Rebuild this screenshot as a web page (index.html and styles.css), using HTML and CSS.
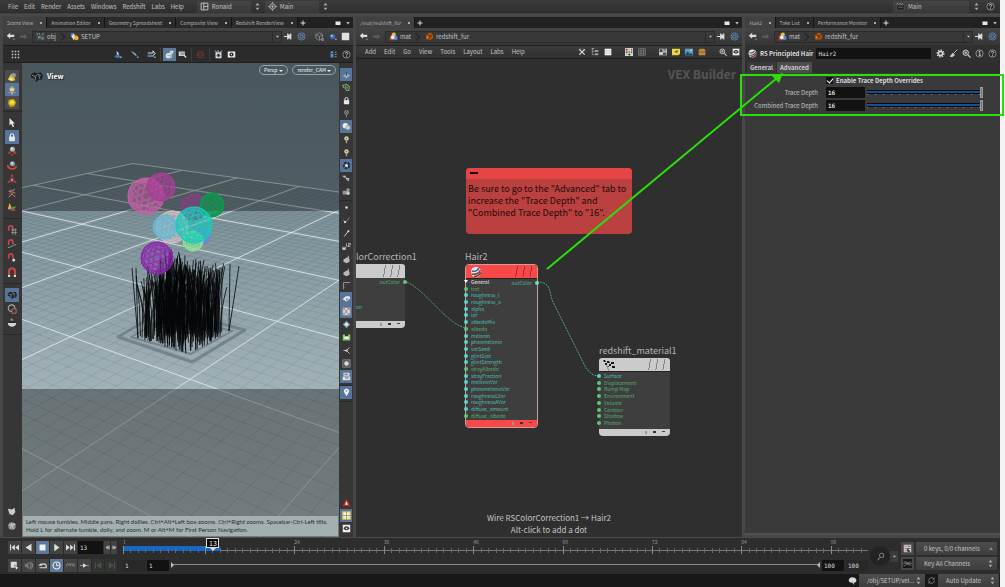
FILE: index.html
```
<!DOCTYPE html>
<html lang="en">

<head>
    <meta charset="UTF-8">
    <meta name="viewport" content="width=device-width, initial-scale=1.0">
    <title>redshift_fur</title>
    <link rel="stylesheet" href="styles.css">
</head>

<body>

    <!-- icon set -->
    <svg class="sprite" aria-hidden="true">
        <symbol id="layout" viewBox="0 0 12 12"><path d="M1.500 1.500h9v9h-9zM5 1.500v9M5 6h5.500" fill="none" stroke="#c8c8c8" stroke-width="1.200"/></symbol>
        <symbol id="target" viewBox="0 0 12 12"><circle cx="6" cy="6" r="3.500" fill="none" stroke="#c8c8c8"/><circle cx="6" cy="6" r="1.500" fill="#c8c8c8"/><path d="M6 0l1.500 2h-3zM6 12l1.500-2h-3zM0 6l2-1.500v3zM12 6l-2-1.500v3z" fill="#c8c8c8"/></symbol>
        <symbol id="updown" viewBox="0 0 12 12"><path d="M6 1l2.500 3.500h-5zM6 11l2.500-3.500h-5z" fill="#a8a8a8"/></symbol>
        <symbol id="clap" viewBox="0 0 12 12"><path d="M1 4h10v7H1z" fill="#252525" stroke="#666" stroke-width=".6"/><path d="M1 3l2-2M4 3.500l2-2M7 4l2-2" stroke="#bbb"/><path d="M3 7h6" stroke="#777"/></symbol>
        <symbol id="help" viewBox="0 0 12 12"><circle cx="6" cy="6" r="4.800" fill="#222" stroke="#aaa"/><path d="M4.300 4.800C4.300 2.500 8 2.700 7.600 5 7.400 6 6 6 6 7.300" fill="none" stroke="#ddd" stroke-width="1.300"/><circle cx="6" cy="9" r=".8" fill="#ddd"/></symbol>
        <symbol id="info" viewBox="0 0 12 12"><circle cx="6" cy="6" r="4.800" fill="none" stroke="#aaa"/><path d="M5 5h1.500v3.500M5 8.500h3" fill="none" stroke="#ddd"/><circle cx="6" cy="3.200" r=".9" fill="#ddd"/></symbol>
        <symbol id="back" viewBox="0 0 12 12"><path d="M1 5l4.500-4v2.500H11v3H5.500V9z" fill="#dcdcdc"/><path d="M9 9h3l-1.500 2z" fill="#999"/></symbol>
        <symbol id="forward" viewBox="0 0 12 12"><path d="M11 6L7 2.500v2H1.500v3H7v2z" fill="#5c5c5c"/></symbol>
        <symbol id="obj" viewBox="0 0 12 12"><path d="M1 4h10v7H1z" fill="#3d5054"/><path d="M1 1l1.500 3M4 1l1.500 3M8 3l3-1" stroke="#aaa"/><path d="M3 6h3v2H3z" fill="#87a5a5"/><path d="M7 7h4v3H7z" fill="#777"/></symbol>
        <symbol id="geo" viewBox="0 0 12 12"><path d="M1 2l4-1v5L1 7z" fill="#4c82c8"/><path d="M2 6l3-4 3 4-3 5z" fill="#e4e4e4"/><path d="M6 2l4 3-3 3z" fill="#cf3728"/><circle cx="8.500" cy="8" r="3" fill="#e8b229"/></symbol>
        <symbol id="mat" viewBox="0 0 12 12"><path d="M1 6l3-4 3 3v6H1z" fill="#c93c2e"/><circle cx="6.500" cy="3.500" r="2.700" fill="#e0c14a"/><circle cx="8.500" cy="8" r="3" fill="#4a8bd0"/><circle cx="5" cy="7" r="2.500" fill="#eee"/></symbol>
        <symbol id="box" viewBox="0 0 12 12"><path d="M2 3l5-2 4 2-1 6-5 2-4-2z" fill="#b65a12"/><path d="M2 3l4 2 5-2M6 5L5 11" stroke="#542605" fill="none"/><circle cx="3.500" cy="7" r="1" fill="#f09835"/><circle cx="8" cy="6.500" r="1" fill="#542605"/></symbol>
        <symbol id="pin" viewBox="0 0 12 12"><path d="M0 6h5M5 2v8M5 4h4v4H5M9 2v8" fill="none" stroke="#ddd" stroke-width="1.600"/><path d="M5 4h4v4H5z" fill="#ddd"/></symbol>
        <symbol id="link" viewBox="0 0 12 12"><circle cx="6" cy="6" r="4.800" fill="#33495f" stroke="#637f9d" stroke-width="1.300"/><circle cx="6" cy="6" r="2.300" fill="none" stroke="#7e9dbf"/></symbol>
        <symbol id="cube" viewBox="0 0 12 12"><path d="M1 3.500L6 1l4 2.500v5L5.500 11 1 8zM1 3.500L6 6l4-2.500M6 6v5" fill="none" stroke="#8b9a9a"/><path d="M8 8h4v4H8z" fill="#777"/></symbol>
        <symbol id="bluedot" viewBox="0 0 12 12"><circle cx="6" cy="6" r="3.400" fill="#3972bb"/><circle cx="5" cy="5" r="1.300" fill="#a9cdf4"/><path d="M9 9h3l-1.500 2z" fill="#ccc"/></symbol>
        <symbol id="white" viewBox="0 0 12 12"><path d="M1 1h10v10H1z" fill="#e2e2e2"/></symbol>
        <symbol id="maxi" viewBox="0 0 12 12"><path d="M1 3h10v7H1z" fill="#e8e8e8"/></symbol>
        <symbol id="down" viewBox="0 0 12 12"><path d="M2.500 4h7L6 9z" fill="#bbb"/></symbol>
        <symbol id="plus" viewBox="0 0 12 12"><path d="M6 1v10M1 6h10" stroke="#ddd" stroke-width="2"/></symbol>
        <symbol id="dots" viewBox="0 0 12 12"><path d="M1 2h10M1 6h10M1 10h10" stroke="#ccc" stroke-width="2" stroke-dasharray="2"/></symbol>
        <symbol id="handle" viewBox="0 0 12 12"><path d="M1 8l4-1 2-5 1 5 3 2-5 2z" fill="#4178b4"/><path d="M5 1l3 5H5z" fill="#ddd"/><path d="M9 9h3l-1.500 2z" fill="#ccc"/></symbol>
        <symbol id="handle2" viewBox="0 0 12 12"><path d="M1 2l6 2 3 5-4-2z" fill="#4178b4"/><path d="M3 2l5 5" stroke="#ddd"/><path d="M9 9h3l-1.500 2z" fill="#ccc"/></symbol>
        <symbol id="handle3" viewBox="0 0 12 12"><path d="M1 4h7V1l3 4-3 2M1 8h8" stroke="#ddd" fill="none" stroke-width="1.300"/><path d="M1 6h6v3H1z" fill="#4178b4"/><path d="M9 9h3l-1.500 2z" fill="#ccc"/></symbol>
        <symbol id="cubes" viewBox="0 0 12 12"><path d="M1 6l2-2h3l1-3h4v3L9 6v4L7 11H3l-2-1z" fill="#dfe5ea"/><path d="M3 7h4v4M7 3l3 1M7 7l3-2" stroke="#71889e" fill="none" stroke-width=".8"/></symbol>
        <symbol id="select" viewBox="0 0 12 12"><path d="M1 2h8v6H1z" fill="#d3d9df"/><path d="M3 3h5v4H3z" fill="#8ca5be"/><path d="M8 7l3 3" stroke="#eee" stroke-width="1.500"/></symbol>
        <symbol id="stopred" viewBox="0 0 12 12"><circle cx="6" cy="6" r="4.600" fill="none" stroke="#6e3030" stroke-width="1.200"/><path d="M3.500 4h5v4h-5z" fill="none" stroke="#783838"/></symbol>
        <symbol id="film" viewBox="0 0 12 12"><path d="M2 3h8v8H2z" fill="#ddd"/><circle cx="6" cy="7" r="2.500" fill="#46718f"/><path d="M1 1l3 2M5 0l1 3M11 1L8 3" stroke="#ddd"/><circle cx="6" cy="7" r="1" fill="#111"/></symbol>
        <symbol id="cam" viewBox="0 0 12 12"><path d="M1 2h10v8H1z" fill="#eee"/><circle cx="6" cy="6" r="2.800" fill="#222"/><circle cx="6" cy="6" r="1" fill="#eee"/></symbol>
        <symbol id="people" viewBox="0 0 12 12"><circle cx="4" cy="3" r="1.700" fill="#4f8fcf"/><path d="M2 5h4v5H2z" fill="#4f8fcf"/><path d="M8 3h2M8 6h2M8 9h2" stroke="#8aa8c8" stroke-width="1.500"/></symbol>
        <symbol id="shader" viewBox="0 0 12 12"><path d="M1 9l4-7 3 2 2 6-5 1z" fill="#e0c33d"/><circle cx="8" cy="4" r="2.700" fill="#999"/><path d="M2 9l3-2 2 3z" fill="#fff3ab"/></symbol>
        <symbol id="lamp" viewBox="0 0 12 12"><path d="M6 1l4 4-4 3-4-3z" fill="#b5a677"/><circle cx="6" cy="6" r="2.500" fill="#edd27c"/><path d="M5 8h2v3H5zM1 9h3M8 9h3" stroke="#999" fill="#ccc"/></symbol>
        <symbol id="sphere-y" viewBox="0 0 12 12"><path d="M2 2l6-1 3 4-2 5-5 1-3-4z" fill="#b99b16"/><circle cx="6" cy="5.500" r="3" fill="#f2d838"/></symbol>
        <symbol id="cursor" viewBox="0 0 12 12"><path d="M3 0v9l2-2 2 4 1.500-.7L7 6.500h2.500z" fill="#e8e8e8"/></symbol>
        <symbol id="lock" viewBox="0 0 12 12"><path d="M2.500 5.500h7V11h-7z" fill="#e8e8e8"/><path d="M4 6V4a2 2 0 0 1 4 0v2" fill="none" stroke="#e8e8e8" stroke-width="1.300"/></symbol>
        <symbol id="move" viewBox="0 0 12 12"><path d="M0 10l3-4 2 2zM12 10L9 5 7 9zM4 10l2 2 2-2z" fill="#c23b2e"/><circle cx="6.500" cy="4" r="3" fill="#a9b6c1"/><circle cx="6" cy="3" r="1.200" fill="#e5e9ed"/></symbol>
        <symbol id="rotate" viewBox="0 0 12 12"><path d="M1 6c0 6 10 6 10 1" fill="none" stroke="#d04a26" stroke-width="2.200"/><circle cx="6.500" cy="4.500" r="3" fill="#8ba3bd"/><circle cx="6" cy="4" r="1.200" fill="#dce5ee"/></symbol>
        <symbol id="scale" viewBox="0 0 12 12"><path d="M6 0l2 3H4zM0 11l3-4 1 3zM12 11L9 7 8 10z" fill="#d03d35"/><path d="M4 4h4v6H4z" fill="#923b3b"/><circle cx="6" cy="7" r="1.400" fill="#8da4bf"/></symbol>
        <symbol id="pose" viewBox="0 0 12 12"><path d="M6 2v5l-4 4M6 7l4 4M2 4l8 2M3 2l3 3 3-4" stroke="#b9a3a3" fill="none"/><circle cx="6" cy="5" r="1.500" fill="#c23b35"/><circle cx="3" cy="7" r="1" fill="#c23b35"/></symbol>
        <symbol id="axes" viewBox="0 0 12 12"><path d="M3 1l3 7-5 1z" fill="#e0b52f"/><path d="M1 9h8l2 2-8-1z" fill="#cb3c2c"/><path d="M5 6l6-1-3 5z" fill="#4b9951"/><path d="M4 7l3 1-2 2z" fill="#4e83cf"/></symbol>
        <symbol id="magnet" viewBox="0 0 12 12"><path d="M2.500 11V5a3.500 3.500 0 0 1 7 0v6" fill="none" stroke="#c8454a" stroke-width="2.600"/><path d="M1.200 9.500h2.600V12H1.200zM8.200 9.500h2.600V12H8.200z" fill="#ddd"/></symbol>
        <symbol id="magnet-grid" viewBox="0 0 12 12"><path d="M2 7V3.500a2.500 2.500 0 0 1 5 0V7" fill="none" stroke="#c8454a" stroke-width="2"/><path d="M5 6h7M5 9h7M7 4v8M10 4v8" stroke="#aaa" stroke-width=".8"/></symbol>
        <symbol id="magnet-curve" viewBox="0 0 12 12"><path d="M2 7V3.500a2.500 2.500 0 0 1 5 0V6" fill="none" stroke="#c8454a" stroke-width="2"/><path d="M1 10c5 1 5-4 10-3" fill="none" stroke="#aaa"/></symbol>
        <symbol id="magnet-point" viewBox="0 0 12 12"><path d="M2 7V3.500a2.500 2.500 0 0 1 5 0V6" fill="none" stroke="#c8454a" stroke-width="2"/><circle cx="8" cy="8.500" r="1.800" fill="#ddd"/></symbol>
        <symbol id="viewtool" viewBox="0 0 12 12"><path d="M1 4l3-2 3 1 3-1 2 3-1 4-3 0-2 2-2-3-3-1z" fill="#1d2225"/><path d="M2 5l3 1 2-2 3 1M5 6v3M8 5l1 3" stroke="#87949c" fill="none" stroke-width=".8"/></symbol>
        <symbol id="region" viewBox="0 0 12 12"><circle cx="5.500" cy="5" r="4" fill="none" stroke="#aaa" stroke-width="1.300"/><path d="M6 6h5v5H6z" fill="#4a2a2a" stroke="#b77" /></symbol>
        <symbol id="bowl" viewBox="0 0 12 12"><path d="M1 6h10c0 6-10 6-10 0z" fill="#cfd9db"/><path d="M2 6c0-2 8-2 8 0z" fill="#222"/><path d="M5 0l3 3H4z" fill="#999"/></symbol>
        <symbol id="brush" viewBox="0 0 12 12"><path d="M1 2l5 1 3-2 1 5-3 4-4-2z" fill="#ccc"/><path d="M2 8l3 2" stroke="#b0554d"/></symbol>
        <symbol id="ball" viewBox="0 0 12 12"><circle cx="6" cy="6" r="4.500" fill="#8d8d8d"/><path d="M2 5l8-1M3 9l6-6M5 2l3 8" stroke="#ddd" stroke-width=".8"/></symbol>
        <symbol id="plane" viewBox="0 0 12 12"><path d="M1 8l5-3 5 2-5 4z" fill="#9fb0be"/><path d="M6 3v5" stroke="#2b3a46"/></symbol>
        <symbol id="green" viewBox="0 0 12 12"><path d="M1 3l5-1 4 3-1 5H6L5 7 2 6z" fill="none" stroke="#6fa06b" stroke-width="1.600"/><path d="M4 4l4 3" stroke="#aacba6"/></symbol>
        <symbol id="bulb" viewBox="0 0 12 12"><circle cx="6" cy="4.500" r="3" fill="#d5d3a5"/><path d="M5 7h2v4H5z" fill="#999"/><circle cx="6" cy="4.500" r="1" fill="#666"/></symbol>
        <symbol id="bulb-off" viewBox="0 0 12 12"><circle cx="6" cy="4.500" r="2.600" fill="none" stroke="#888" stroke-width="1.300"/><path d="M4 3l4 3M8 3L4 6M6 7v4" stroke="#999"/></symbol>
        <symbol id="spheres" viewBox="0 0 12 12"><circle cx="4.500" cy="5" r="3.600" fill="#f0f0f0"/><circle cx="8" cy="7.500" r="3.200" fill="#c7cdd2" stroke="#777" stroke-width=".6"/></symbol>
        <symbol id="wheel" viewBox="0 0 12 12"><circle cx="6" cy="6" r="3.500" fill="none" stroke="#22282e" stroke-width="3" stroke-dasharray="3 1.400"/><circle cx="6" cy="6" r="2" fill="#dfe6ec"/></symbol>
        <symbol id="link2" viewBox="0 0 12 12"><path d="M1 3h3l2 3h3v2M3 2v3M6 7l3 2" stroke="#bbb" fill="none" stroke-width="1.400"/></symbol>
        <symbol id="group" viewBox="0 0 12 12"><path d="M1 5h5v5H1zM6 2h4v4H6z" fill="#999"/><circle cx="8" cy="8" r="2.500" fill="#ccc"/></symbol>
        <symbol id="point" viewBox="0 0 12 12"><circle cx="6" cy="6" r="1.600" fill="#e5e5e5"/></symbol>
        <symbol id="norm" viewBox="0 0 12 12"><path d="M2 5l2 4 6-7" stroke="#999" fill="none"/><circle cx="4" cy="8" r="1.500" fill="#ddd"/></symbol>
        <symbol id="needle" viewBox="0 0 12 12"><path d="M9 2L3 10" stroke="#ccc" stroke-width="1.300"/><circle cx="8.500" cy="3" r="1.300" fill="#ddd"/></symbol>
        <symbol id="num" viewBox="0 0 12 12"><path d="M1 7h4v3H1zM6 2v4M8 2h3v2H8v2h3" stroke="#ccc" fill="none"/><path d="M1 8h3v2H1z" fill="#ccc"/></symbol>
        <symbol id="poly" viewBox="0 0 12 12"><path d="M2 6l5-3 3 2v4l-4 2-4-2z" fill="#b9b9b9"/><path d="M8 1l1 3" stroke="#ddd"/></symbol>
        <symbol id="corner" viewBox="0 0 12 12"><path d="M2 11V2h9" stroke="#aaa" fill="none"/><path d="M4 4h6M4 4v6" stroke="#666" stroke-dasharray="1" fill="none"/></symbol>
        <symbol id="flag" viewBox="0 0 12 12"><path d="M1 7l4-4h5l1 3-5 4z" fill="#eee"/><path d="M5 6h4l-3 3z" fill="#5a7ca3"/></symbol>
        <symbol id="checker" viewBox="0 0 12 12"><path d="M1 1h10v10H1z" fill="#d0d6da"/><path d="M1 1h3v3H1zM7 1h4v3H7zM4 4h3v4H4zM1 8h3v3H1zM7 8h4v3H7z" fill="#b59a8f"/></symbol>
        <symbol id="diamond" viewBox="0 0 12 12"><path d="M6 1l5 5-5 5-5-5z" fill="#7897a8"/><path d="M6 3l3 3-3 3-3-3z" fill="#dae7ed"/></symbol>
        <symbol id="robot" viewBox="0 0 12 12"><path d="M1 2h3v2h4V2h3v8H1z" fill="#8cc46c"/><path d="M3 5h6v3H3z" fill="#e8f1df"/></symbol>
        <symbol id="tri" viewBox="0 0 12 12"><path d="M2 6h4l4-4M6 6l4 4" stroke="#ccc" fill="none" stroke-width="1.200"/><circle cx="6" cy="6" r="1.500" fill="#ddd"/></symbol>
        <symbol id="frame" viewBox="0 0 12 12"><path d="M1 1h10v10H1z" fill="#555" stroke="#888"/><circle cx="6" cy="6" r="3" fill="#ddd"/></symbol>
        <symbol id="stack" viewBox="0 0 12 12"><path d="M2 1h8v4H2zM1 6h10v5H1z" fill="#e2e2e2"/><path d="M3 3h5M4 8h5" stroke="#444"/></symbol>
        <symbol id="pinmap" viewBox="0 0 12 12"><path d="M6 11L3 6a3.500 3.500 0 1 1 6 0z" fill="#e9eff5"/><circle cx="6" cy="4" r="1.300" fill="#9aa"/></symbol>
        <symbol id="warn" viewBox="0 0 12 12"><path d="M6 1l5.500 10H.5z" fill="#c42a2a"/><path d="M6 4l2 5H4z" fill="#eee"/></symbol>
        <symbol id="quad" viewBox="0 0 12 12"><path d="M1 1h10v10H1z" fill="#eee" stroke="#d8bb32" stroke-width="1.400"/><path d="M6 1v10M1 6h10" stroke="#a58e20"/></symbol>
        <symbol id="eye" viewBox="0 0 12 12"><path d="M1 1h10v10H1z" fill="#eee"/><path d="M2 6c2-4 6-4 8 0-2 3-6 3-8 0z" fill="#333"/><circle cx="6" cy="5.800" r="1.200" fill="#eee"/></symbol>
        <symbol id="tools" viewBox="0 0 12 12"><path d="M2 10l8-8M2 2l8 8" stroke="#ddd" stroke-width="1.800"/><path d="M1 3l3-2M8 1l3 3" stroke="#ddd"/></symbol>
        <symbol id="tree" viewBox="0 0 12 12"><path d="M2 1v9h4M2 5h4" stroke="#aaa" fill="none"/><path d="M6 3h5v3H6zM6 8h5v3H6zM1 0h4v2H1z" fill="#999"/></symbol>
        <symbol id="list" viewBox="0 0 12 12"><path d="M1 1h10v10H1z" fill="#eee"/><path d="M1 4h10M1 7h10" stroke="#bbb" stroke-width=".7"/></symbol>
        <symbol id="palette" viewBox="0 0 12 12"><path d="M0 0h12v12H0z" fill="#ddd"/><path d="M1 1h3v3H1z" fill="#d93030"/><path d="M5 1h3v3H5z" fill="#e8c52c"/><path d="M9 1h2v3H9zM1 5h3v3H1z" fill="#3d76ce"/><path d="M5 5h3v3H5z" fill="#44a94f"/><path d="M9 5h2v3H9z" fill="#d93030"/><path d="M1 9h3v2H1z" fill="#e8c52c"/><path d="M5 9h3v2H5z" fill="#222"/></symbol>
        <symbol id="table" viewBox="0 0 12 12"><path d="M1 1h10v10H1zM4.500 1v10M8 1v10M1 4.500h10M1 8h10" fill="none" stroke="#8a8a8a"/></symbol>
        <symbol id="snap" viewBox="0 0 12 12"><path d="M0 1h12v10H0z" fill="#bbb"/><path d="M1 2h4v4H1zM6 7h5v3H6zM7 2h3v3H7z" fill="#444"/><path d="M2 8h3M8 3l2 2" stroke="#fff"/></symbol>
        <symbol id="note" viewBox="0 0 12 12"><path d="M0 1h12v8l-3 2H0z" fill="#ecd748"/><path d="M3 6l6-3-1 4z" fill="#5d5520"/></symbol>
        <symbol id="image" viewBox="0 0 12 12"><path d="M0 1h12v10H0z" fill="#5a9bd6"/><path d="M0 11l4-6 3 4 2-2 3 4z" fill="#24485f"/><circle cx="9" cy="3.500" r="1.500" fill="#f2d04b"/></symbol>
        <symbol id="shelf" viewBox="0 0 12 12"><path d="M1 3l2-2h6l2 2v8H1z" fill="#c08a45"/><path d="M1 6h10" stroke="#6a4519"/></symbol>
        <symbol id="search" viewBox="0 0 12 12"><circle cx="5" cy="5" r="3.600" fill="#555" stroke="#ccc" stroke-width="1.300"/><path d="M8 8l3.500 3.500" stroke="#ccc" stroke-width="1.600"/><path d="M3.500 5h3M5 3.500v3" stroke="#ddd"/></symbol>
        <symbol id="gear" viewBox="0 0 12 12"><circle cx="6" cy="6" r="4.400" fill="none" stroke="#ddd" stroke-width="2" stroke-dasharray="1.700"/><circle cx="6" cy="6" r="2.700" fill="none" stroke="#ddd" stroke-width="1.800"/></symbol>
        <symbol id="broom" viewBox="0 0 12 12"><path d="M11 1L6 6" stroke="#ccc" stroke-width="1.200"/><path d="M5 5l3 3-4 3-3-1z" fill="#ccc"/></symbol>
        <symbol id="rsball" viewBox="0 0 12 12"><circle cx="6" cy="6" r="5.200" fill="#e9e6e6"/><path d="M2 5c4 1 6-1 7-3" stroke="#3f6398" stroke-width="1.600" fill="none"/><path d="M1.500 8c4 1 8-1 9-4" stroke="#9a3b32" stroke-width="1.500" fill="none"/><path d="M4 10.500c3 0 5-1 7-4" stroke="#4a4a4a" stroke-width="1.400" fill="none"/></symbol>
        <symbol id="finish" viewBox="0 0 12 12"><path d="M0 1l5 1 7 1v6L6 8 1 6z" fill="#ccc"/><path d="M0 1h2l1 2H1zM4 2h2l1 2H4zM8 3h3v2H8zM2 4h2v2H2zM6 5h2v2H6zM9 7h3v2H9zM4 7h2v1z" fill="#151515"/><path d="M3 5l3 7" stroke="#555" stroke-width=".6"/></symbol>
        <symbol id="first" viewBox="0 0 12 12"><path d="M0 2h1.500v8H0zM6.500 2v8L2 6zM12 2v8L7 6z" fill="#ddd"/></symbol>
        <symbol id="last" viewBox="0 0 12 12"><path d="M12 2h-1.500v8H12zM5.500 2v8L10 6zM0 2v8l5-4z" fill="#ddd"/></symbol>
        <symbol id="rev" viewBox="0 0 12 12"><path d="M10 1v10L2 6z" fill="#ddd"/></symbol>
        <symbol id="play" viewBox="0 0 12 12"><path d="M3 1v10l7-5z" fill="#ddd"/></symbol>
        <symbol id="stop" viewBox="0 0 12 12"><path d="M2 2h8v8H2z" fill="#eef2f5"/></symbol>
        <symbol id="prevf" viewBox="0 0 12 12"><path d="M7 2v8L1 6zM8 2h3v8H8z" fill="#bbb"/></symbol>
        <symbol id="nextf" viewBox="0 0 12 12"><path d="M5 2v8l6-4zM1 2h3v8H1z" fill="#bbb"/></symbol>
        <symbol id="flip" viewBox="0 0 12 12"><path d="M1 1h8v8H1z" fill="#ddd"/><path d="M6 5l5 4-3 3z" fill="#eee" stroke="#333" stroke-width=".6"/></symbol>
        <symbol id="audio" viewBox="0 0 12 12"><path d="M1 4h2l3-3v10L3 8H1z" fill="#777"/><path d="M7 2c3 2 3 6 0 8M9 1c3 3 3 7 0 10" stroke="#aaa" fill="none"/></symbol>
        <symbol id="loop" viewBox="0 0 12 12"><path d="M2 9h9V7c0-4-7-4-7-1" stroke="#ddd" fill="none" stroke-width="1.500"/><path d="M0 6h6L4 3z" fill="#ddd"/></symbol>
        <symbol id="clock" viewBox="0 0 12 12"><circle cx="6" cy="6" r="4.600" fill="none" stroke="#eee" stroke-width="1.500"/><path d="M6 3v3h3" stroke="#eee" fill="none" stroke-width="1.300"/></symbol>
        <symbol id="ruler" viewBox="0 0 12 12"><path d="M1 8V4h10v4M4 4v3M6 4v3M8.500 4v3" stroke="#888" fill="none"/></symbol>
        <symbol id="step" viewBox="0 0 12 12"><path d="M0 6h12" stroke="#aaa"/><path d="M4 3l5 3-5 3z" fill="#ddd"/></symbol>
        <symbol id="keyprev" viewBox="0 0 12 12"><path d="M2 2v8M9 3v6L4 6z" stroke="#4d6a4a" fill="#3d4b3c"/></symbol>
        <symbol id="keynext" viewBox="0 0 12 12"><path d="M10 2v8M3 3v6l5-3z" stroke="#4d6a4a" fill="#3d4b3c"/></symbol>
        <symbol id="key" viewBox="0 0 12 12"><circle cx="7.500" cy="4.500" r="2.800" fill="none" stroke="#777" stroke-width="1.400"/><path d="M6 7l-4 4M3 8l1.500 1.500" stroke="#777" stroke-width="1.400"/></symbol>
        <symbol id="chan" viewBox="0 0 12 12"><path d="M1 1h10v10H1z" fill="#ccc"/><path d="M2 3h3M2 6h3M2 9h3" stroke="#b54"/><path d="M6 3h4M6 6h4" stroke="#444"/><path d="M5 5l5 5-4 1z" fill="#333"/></symbol>
        <symbol id="curve" viewBox="0 0 12 12"><path d="M0 0h12v12H0z" fill="#15191e"/><path d="M1 4h4l2 4h4" stroke="#e08b32" fill="none"/><path d="M1 9c4 0 5-6 10-5" stroke="#5896d3" fill="none"/><path d="M0 6h12" stroke="#999" stroke-width=".7"/></symbol>
        <symbol id="brain" viewBox="0 0 12 12"><path d="M1 6c0-3 3-5 6-4 3 0 5 3 4 5 0 2-3 2-4 2l2 2H7L6 9C3 9 1 8 1 6z" fill="#d8d8d8"/></symbol>
        <symbol id="refresh" viewBox="0 0 12 12"><path d="M2 6a4 4 0 0 1 7-2.500M10 6a4 4 0 0 1-7 2.500" stroke="#777" fill="none" stroke-width="1.300"/><path d="M10 1v4H7zM2 11V7h3z" fill="#777"/></symbol>
    </svg>

    <div class="app">
        <header class="menubar">
            <nav class="menu">
                <a href="#">File</a><a href="#">Edit</a><a href="#">Render</a><a href="#">Assets</a><a href="#">Windows</a><a href="#">Redshift</a><a href="#">Labs</a><a href="#">Help</a>
            </nav>
            <button class="combo desktop"><svg><use href="#layout"/></svg>Ronald</button>
            <button class="icon" aria-label="Choose desktop"><svg><use href="#updown"/></svg></button>
            <button class="combo"><svg><use href="#target"/></svg>Main</button>
            <button class="icon" aria-label="Choose radial menu"><svg><use href="#updown"/></svg></button>
            <span class="fill"></span>
            <button class="combo take"><svg><use href="#clap"/></svg>Main</button>
            <button class="icon" aria-label="Choose take"><svg><use href="#updown"/></svg></button>
            <button class="icon" aria-label="Help"><svg><use href="#help"/></svg></button>
        </header>

        <main class="panes">
            <!-- scene view -->
            <section class="pane">
                <div class="tabs">
                    <button class="tab active">Scene View<i></i></button>
                    <button class="tab">Animation Editor<i></i></button>
                    <button class="tab">Geometry Spreadsheet<i></i></button>
                    <button class="tab">Composite View<i></i></button>
                    <button class="tab">Redshift RenderView<i></i></button>
                    <button class="icon" aria-label="New tab"><svg><use href="#plus"/></svg></button>
                    <span class="fill"></span>
                    <button class="icon" aria-label="Maximize"><svg><use href="#maxi"/></svg></button>
                    <button class="icon" aria-label="Pane menu"><svg><use href="#down"/></svg></button>
                </div>
                <div class="pathbar">
                    <button class="icon" aria-label="Back"><svg><use href="#back"/></svg></button>
                    <button class="icon" aria-label="Forward"><svg><use href="#forward"/></svg></button>
                    <div class="path">
                        <svg><use href="#obj"/></svg><a href="#">obj</a><b></b><svg><use href="#geo"/></svg><a href="#">SETUP</a>
                        <span class="fill"></span>
                        <button class="icon" aria-label="Recent paths"><svg><use href="#down"/></svg></button>
                    </div>
                    <button class="icon" aria-label="Pin"><svg><use href="#pin"/></svg></button>
                    <button class="icon" aria-label="Link"><svg><use href="#link"/></svg></button>
                    <button class="icon gap" aria-label="Shading"><svg><use href="#cube"/></svg></button>
                    <button class="icon" aria-label="Objects"><svg><use href="#bluedot"/></svg></button>
                    <button class="icon" aria-label="Single view"><svg><use href="#white"/></svg></button>
                </div>
                <div class="toolbar viewbar">
                    <button class="icon" aria-label="Layout grid"><svg><use href="#dots"/></svg></button>
                    <span class="fill"></span>
                    <div class="set wide">
                        <button class="icon" aria-label="Handle"><svg><use href="#handle"/></svg></button>
                        <button class="icon" aria-label="Align"><svg><use href="#handle2"/></svg></button>
                        <button class="icon" aria-label="Orient"><svg><use href="#handle3"/></svg></button>
                    </div>
                    <div class="set">
                        <button class="icon on" aria-label="Select geometry"><svg><use href="#cubes"/></svg></button>
                        <button class="icon" aria-label="Select region"><svg><use href="#select"/></svg></button>
                    </div>
                    <div class="set"><button class="icon" aria-label="Stop"><svg><use href="#stopred"/></svg></button></div>
                    <div class="set last">
                        <button class="icon" aria-label="Flipbook"><svg><use href="#film"/></svg></button>
                        <button class="icon" aria-label="Snapshot"><svg><use href="#cam"/></svg></button>
                    </div>
                    <span class="fill"></span>
                    <button class="icon" aria-label="Visibility"><svg><use href="#people"/></svg></button>
                    <button class="icon" aria-label="Help"><svg><use href="#help"/></svg></button>
                </div>
                <div class="scene">
                    <div class="rail left" id="leftRail"></div>
                    <div class="viewport">
                        <svg id="stage" class="stage" viewBox="22 63 317 474" preserveAspectRatio="xMidYMid slice">
                            <defs>
                                <linearGradient id="sky" x1="0" y1="0" x2="0" y2="1">
                                    <stop offset="0" stop-color="#71878f"/>
                                    <stop offset=".31" stop-color="#7d929a"/>
                                    <stop offset=".69" stop-color="#a1b2b7"/>
                                    <stop offset="1" stop-color="#b2c0c2"/>
                                </linearGradient>
                            </defs>
                            <rect x="0" y="63" width="400" height="474" fill="url(#sky)"/>
                            <g id="grid"></g>
                            <path d="M0 0H400V211H0zM0 389H400V560H0z" fill="#000" fill-opacity=".35"/>
                            <g fill="none" stroke="#67757a" stroke-opacity=".7" stroke-linejoin="round">
                                <path d="M118 337L165 309L245 330L192 362z" stroke-width="3"/>
                                <path d="M131 337L168 316L232 331L191 354z" stroke-width="2"/>
                            </g>
                            <path id="hair" fill="none" stroke="#050607" stroke-width=".8"/>
                            <g id="balls"></g>
                        </svg>
                        <div class="view-title"><svg><use href="#viewtool"/></svg>View</div>
                        <div class="view-menus">
                            <button>Persp <i></i></button>
                            <button>render_CAM<i></i></button>
                        </div>
                        <p class="hint">Left mouse tumbles. Middle pans. Right dollies. Ctrl+Alt+Left box-zooms. Ctrl+Right zooms. Spacebar-Ctrl-Left tilts. Hold L for alternate tumble, dolly, and zoom. M or Alt+M for First Person Navigation.</p>
                    </div>
                    <div class="rail right" id="rightRail"></div>
                </div>
            </section>

            <!-- network editor -->
            <section class="pane">
                <div class="tabs">
                    <button class="tab active"><em>/mat/redshift_fur</em><i></i></button>
                    <button class="icon" aria-label="New tab"><svg><use href="#plus"/></svg></button>
                    <span class="fill"></span>
                    <button class="icon" aria-label="Maximize"><svg><use href="#maxi"/></svg></button>
                    <button class="icon" aria-label="Pane menu"><svg><use href="#down"/></svg></button>
                </div>
                <div class="pathbar">
                    <button class="icon" aria-label="Back"><svg><use href="#back"/></svg></button>
                    <button class="icon" aria-label="Forward"><svg><use href="#forward"/></svg></button>
                    <div class="path">
                        <svg><use href="#mat"/></svg><a href="#">mat</a><b></b><svg><use href="#box"/></svg><a href="#">redshift_fur</a>
                        <span class="fill"></span>
                        <button class="icon" aria-label="Recent paths"><svg><use href="#down"/></svg></button>
                    </div>
                    <button class="icon" aria-label="Pin"><svg><use href="#pin"/></svg></button>
                    <button class="icon" aria-label="Link"><svg><use href="#link"/></svg></button>
                </div>
                <div class="toolbar netbar">
                    <nav class="menu">
                        <a href="#">Add</a><a href="#">Edit</a><a href="#">Go</a><a href="#">View</a><a href="#">Tools</a><a href="#">Layout</a><a href="#">Labs</a><a href="#">Help</a>
                    </nav>
                    <span class="fill"></span>
                    <div class="set">
                        <button class="icon" aria-label="Customize"><svg><use href="#tools"/></svg></button>
                        <button class="icon" aria-label="Tree"><svg><use href="#tree"/></svg></button>
                        <button class="icon" aria-label="List"><svg><use href="#list"/></svg></button>
                    </div>
                    <div class="set">
                        <button class="icon" aria-label="Colors"><svg><use href="#palette"/></svg></button>
                        <button class="icon" aria-label="Shapes"><svg><use href="#table"/></svg></button>
                    </div>
                    <div class="set">
                        <button class="icon" aria-label="Network box"><svg><use href="#snap"/></svg></button>
                        <button class="icon" aria-label="Sticky note"><svg><use href="#note"/></svg></button>
                        <button class="icon" aria-label="Background image"><svg><use href="#image"/></svg></button>
                        <button class="icon" aria-label="Shelf"><svg><use href="#shelf"/></svg></button>
                    </div>
                    <div class="set">
                        <button class="icon" aria-label="Find"><svg><use href="#search"/></svg></button>
                        <button class="icon" aria-label="Overview"><svg><use href="#eye"/></svg></button>
                    </div>
                </div>
                <div class="network">
                    <div class="context">VEX Builder</div>
                    <svg class="wires" width="387" height="478">
                        <path d="M48 223C64 223 92 269 112 269" stroke="#4f9f74"/>
                        <path d="M181 223C197 223 192 234 198 245L229 307C234 315 238 317 243 317" stroke="#4aa890"/>
                    </svg>
                    <div class="sticky">
                        <header><i></i></header>
                        <p>Be sure to go to the "Advanced" tab to increase the "Trace Depth" and "Combined Trace Depth" to "16".</p>
                    </div>
                    <div class="node color-correct">
                        <h3>lorCorrection1</h3>
                        <div class="card">
                            <header><span class="flags"></span></header>
                            <div class="body"><span class="out">outColor</span><small>on</small></div>
                            <footer></footer>
                        </div>
                    </div>
                    <div class="node hair">
                        <h3>Hair2</h3>
                        <div class="card">
                            <header><svg><use href="#rsball"/></svg><span class="flags"></span></header>
                            <div class="body">
                                <span class="out">outColor</span>
                                <ul>
                                    <li class="group">General</li>
                                    <li class="color">tint</li>
                                    <li>roughness_l</li>
                                    <li>roughness_a</li>
                                    <li>alpha</li>
                                    <li>ior</li>
                                    <li>albedoMix</li>
                                    <li class="color">albedo</li>
                                    <li>melanin</li>
                                    <li>pheomelanin</li>
                                    <li>varSeed</li>
                                    <li>glintSize</li>
                                    <li>glintStrength</li>
                                    <li class="color">strayAlbedo</li>
                                    <li>strayFraction</li>
                                    <li>melaninVar</li>
                                    <li>pheomelaninVar</li>
                                    <li>roughnessLVar</li>
                                    <li>roughnessAVar</li>
                                    <li>diffuse_amount</li>
                                    <li class="color">diffuse_albedo</li>
                                </ul>
                            </div>
                            <footer></footer>
                        </div>
                    </div>
                    <div class="node material">
                        <h3>redshift_material1</h3>
                        <div class="card">
                            <header><svg><use href="#finish"/></svg><span class="flags"></span></header>
                            <div class="body">
                                <ul>
                                    <li>Surface</li>
                                    <li class="color">Displacement</li>
                                    <li class="color">Bump Map</li>
                                    <li class="color">Environment</li>
                                    <li class="color">Volume</li>
                                    <li class="color">Contour</li>
                                    <li class="color">Shadow</li>
                                    <li class="color">Photon</li>
                                </ul>
                            </div>
                            <footer></footer>
                        </div>
                    </div>
                    <p class="status">Wire RSColorCorrection1 → Hair2<br>Alt-click to add a dot</p>
                </div>
            </section>

            <!-- parameters -->
            <section class="pane">
                <div class="tabs">
                    <button class="tab active"><em>Hair2</em><i></i></button>
                    <button class="tab">Take List<i></i></button>
                    <button class="tab">Performance Monitor<i></i></button>
                    <button class="icon" aria-label="New tab"><svg><use href="#plus"/></svg></button>
                    <span class="fill"></span>
                    <button class="icon" aria-label="Maximize"><svg><use href="#maxi"/></svg></button>
                    <button class="icon" aria-label="Pane menu"><svg><use href="#down"/></svg></button>
                </div>
                <div class="pathbar">
                    <button class="icon" aria-label="Back"><svg><use href="#back"/></svg></button>
                    <button class="icon" aria-label="Forward"><svg><use href="#forward"/></svg></button>
                    <div class="path">
                        <svg><use href="#mat"/></svg><a href="#">mat</a><b></b><svg><use href="#box"/></svg><a href="#">redshift_fur</a>
                        <span class="fill"></span>
                        <button class="icon" aria-label="Recent paths"><svg><use href="#down"/></svg></button>
                    </div>
                    <button class="icon" aria-label="Pin"><svg><use href="#pin"/></svg></button>
                    <button class="icon" aria-label="Link"><svg><use href="#link"/></svg></button>
                </div>
                <div class="parm-head">
                    <svg><use href="#rsball"/></svg>
                    <label for="nodeName">RS Principled Hair</label>
                    <input type="text" id="nodeName" value="Hair2">
                    <button class="icon" aria-label="Settings"><svg><use href="#gear"/></svg></button>
                    <button class="icon" aria-label="Clean"><svg><use href="#broom"/></svg></button>
                    <button class="icon" aria-label="Search"><svg><use href="#search"/></svg></button>
                    <button class="icon" aria-label="Info"><svg><use href="#info"/></svg></button>
                    <button class="icon" aria-label="Help"><svg><use href="#help"/></svg></button>
                </div>
                <div class="folder-tabs">
                    <button>General</button>
                    <button class="active">Advanced</button>
                </div>
                <div class="parms">
                    <div class="parm">
                        <span></span>
                        <label class="check"><input type="checkbox" checked>Enable Trace Depth Overrides</label>
                    </div>
                    <div class="parm">
                        <label for="depth">Trace Depth</label>
                        <input type="text" id="depth" value="16">
                        <input type="range" min="0" max="16" value="16" aria-label="Trace Depth">
                    </div>
                    <div class="parm">
                        <label for="combined">Combined Trace Depth</label>
                        <input type="text" id="combined" value="16">
                        <input type="range" min="0" max="16" value="16" aria-label="Combined Trace Depth">
                    </div>
                </div>
                <div class="grip"></div>
            </section>
        </main>

        <footer class="playbar">
            <div class="lanes">
                <div class="lane">
                    <div class="buttons">
                        <button aria-label="First frame"><svg><use href="#first"/></svg></button>
                        <button aria-label="Play backward"><svg><use href="#rev"/></svg></button>
                        <button class="on" aria-label="Stop"><svg><use href="#stop"/></svg></button>
                        <button aria-label="Play"><svg><use href="#play"/></svg></button>
                        <button aria-label="Last frame"><svg><use href="#last"/></svg></button>
                        <input type="text" value="13" aria-label="Current frame">
                        <button class="thin" aria-label="Previous frame"><svg><use href="#prevf"/></svg></button>
                        <button class="thin" aria-label="Next frame"><svg><use href="#nextf"/></svg></button>
                    </div>
                    <div class="timeline" id="timeline">
                        <div class="cached"></div>
                        <div class="playhead">13</div>
                    </div>
                </div>
                <div class="lane">
                    <div class="buttons">
                        <button aria-label="Flipbook"><svg><use href="#flip"/></svg></button>
                        <button aria-label="Audio"><svg><use href="#audio"/></svg></button>
                        <button aria-label="Loop"><svg><use href="#loop"/></svg></button>
                        <button class="on" aria-label="Real time"><svg><use href="#clock"/></svg></button>
                        <button aria-label="Ticks"><svg><use href="#ruler"/></svg></button>
                        <button aria-label="Step"><svg><use href="#step"/></svg></button>
                        <button class="flat" aria-label="Previous key"><svg><use href="#keyprev"/></svg></button>
                        <button class="flat" aria-label="Next key"><svg><use href="#keynext"/></svg></button>
                    </div>
                    <div class="range">
                        <input class="plain" type="text" value="1" aria-label="Global start">
                        <input type="text" value="1" aria-label="Range start">
                        <span class="span"></span>
                        <input type="text" value="100" aria-label="Range end">
                        <input class="plain" type="text" value="100" aria-label="Global end">
                    </div>
                </div>
            </div>
            <button class="setkey" aria-label="Set key"><svg><use href="#key"/></svg></button>
            <button class="icon keymenu" aria-label="Key options"><svg><use href="#down"/></svg></button>
            <div class="keys">
                <button class="icon" aria-label="Channel list"><svg><use href="#chan"/></svg></button>
                <button class="wide">0 keys, 0/0 channels<i></i></button>
                <button class="icon" aria-label="Curve editor"><svg><use href="#curve"/></svg></button>
                <button class="wide">Key All Channels<svg><use href="#updown"/></svg></button>
            </div>
        </footer>

        <footer class="statusbar">
            <svg><use href="#brain"/></svg>
            <button>/obj/SETUP/vel...<svg><use href="#updown"/></svg></button>
            <svg><use href="#refresh"/></svg>
            <button class="update">Auto Update<svg><use href="#updown"/></svg></button>
        </footer>
    </div>

    <svg class="callout" viewBox="0 0 1005 587">
        <rect x="741" y="75" width="262" height="40" fill="none" stroke="#2ae00a" stroke-width="2"/>
        <path d="M547 269L777 78" stroke="#2ae00a" stroke-width="2"/>
        <path d="M783 73L772 76L779 83z" fill="#2ae00a"/>
    </svg>

    <script src="script.js"></script>
</body>

</html>
```
FILE: styles.css
```
* {
    box-sizing: border-box;
}

body {
    margin: 0;
    padding-right: 5px;
    background: #f4f4f4;
    color: #c4c4c4;
    font-family: "Noto Sans CJK SC", "Noto Sans", sans-serif;
    font-size: 6px;
    line-height: 10px;
}

a {
    color: inherit;
    text-decoration: none;
}

button,
input {
    margin: 0;
    padding: 0;
    border: 0;
    background: none;
    color: inherit;
    font: inherit;
}

input {
    min-width: 0;
    background: #121212;
    color: #ddd;
    font-family: "DejaVu Sans Mono", monospace;
    font-size: 6px;
}

svg {
    display: block;
    flex: none;
    width: 9px;
    height: 9px;
}

.sprite {
    position: absolute;
    width: 0;
    height: 0;
}

.fill {
    flex: 1;
}

.icon {
    display: flex;
    flex: none;
    align-items: center;
    justify-content: center;
    width: 13px;
    height: 13px;
}

.on {
    background: #5f7a99;
}

.app {
    display: flex;
    flex-direction: column;
    min-height: 100vh;
    background: #2a2a2a;
}

/* main menu */
.menubar {
    display: flex;
    align-items: center;
    height: 17px;
    padding: 0 3px 4px 8px;
    background: linear-gradient(#3b3b3b, #303030 12px, #222 12px, #4a4a4a 14px, #444);
}

.menu {
    display: flex;
    gap: 6px;
}

.combo {
    display: flex;
    align-items: center;
    gap: 3px;
    width: 54px;
    height: 12px;
    padding-left: 3px;
    background: linear-gradient(#454545, #383838);
    text-align: left;
}

.desktop {
    margin-left: 13px;
}

.menubar .icon {
    width: 14px;
}

.take {
    width: 76px;
}

/* panes */
.panes {
    display: grid;
    flex: 1;
    grid-template-columns: 353fr 389fr 258fr;
}

.pane {
    display: flex;
    flex-direction: column;
    min-width: 0;
    border-left: 3px solid #474747;
    background: #3a3a3a;
}

.tabs {
    display: flex;
    align-items: center;
    height: 11px;
    background: #212121;
    font-size: 5px;
}

.tab {
    display: flex;
    align-items: center;
    gap: 7px;
    height: 11px;
    padding: 0 4px;
    border-right: 1px solid #151515;
    background: #2b2b2b;
    color: #b4b4b4;
    white-space: nowrap;
}

.tab.active {
    background: #414141;
}

.tab i {
    width: 2px;
    height: 2px;
    background: #aaa;
}

.tabs svg {
    width: 6px;
    height: 6px;
}

.tabs .icon {
    width: 10px;
}

.pathbar {
    display: flex;
    align-items: center;
    height: 17px;
    padding: 0 1px;
    background: linear-gradient(#444, #363636);
}

.path {
    display: flex;
    flex: 1;
    align-items: center;
    gap: 2px;
    height: 12px;
    margin-left: 2px;
    padding-left: 3px;
    border: 1px solid #2a2a2a;
    background: #383838;
}

.path b {
    width: 6px;
    height: 6px;
    margin: 0 4px 0 0;
    border: solid #222;
    border-width: 1px 1px 0 0;
    transform: rotate(45deg);
}

.path .icon {
    width: 9px;
    height: 10px;
    border-left: 1px solid #2a2a2a;
}

.path .icon svg {
    width: 5px;
}

.pathbar .gap {
    margin-left: 5px;
}

.toolbar {
    display: flex;
    align-items: center;
    background: #2b2b2b;
    border-top: 1px solid #1e1e1e;
}

.viewbar {
    height: 18px;
    padding-left: 6px;
    border-bottom: 1px solid #1e1e1e;
}

.netbar {
    height: 14px;
    padding-left: 9px;
    background: linear-gradient(#3b3b3b, #303030);
    border-bottom: 1px solid #1c1c1c;
}

.netbar .menu {
    gap: 8px;
}

.set {
    display: flex;
}

.viewbar .set {
    padding: 0 2px;
    border-right: 1px solid #3c3c3c;
}

.viewbar .set.last {
    border-right: 0;
}

.viewbar .wide {
    gap: 4px;
}

.netbar .set {
    margin-left: 8px;
}

.netbar .icon svg {
    width: 8px;
    height: 8px;
}

/* scene view */
.scene {
    display: flex;
    flex: 1;
}

.rail {
    display: flex;
    flex: none;
    flex-direction: column;
    background: #363636;
}

.rail div {
    display: flex;
    flex-direction: column;
    border-bottom: 1px solid #292929;
}

.rail .push {
    margin-top: auto;
    border-bottom: 0;
}

.rail.left {
    width: 19px;
    padding-top: 7px;
}

.rail.left div {
    padding: 4px 2px;
}

.rail.left .icon {
    width: 14px;
    height: 14px;
}

.rail.left svg {
    width: 10px;
    height: 10px;
}

.rail.left .boxed {
    padding: 0 2px 2px;
}

.rail.left .boxed .icon {
    height: 13px;
    background-color: #4b4b4b;
}

.rail .icon.on,
.rail.left .boxed .icon.on {
    background-color: #58749a;
}

.rail.right {
    width: 14px;
    padding-top: 5px;
}

.rail.right div {
    padding: 0 1px 2px;
}

.rail.right .icon {
    width: 12px;
}

.viewport {
    position: relative;
    flex: 1;
    min-height: 470px;
    overflow: hidden;
}

.stage {
    position: absolute;
    inset: 0;
    width: 100%;
    height: 100%;
}

.view-title {
    position: absolute;
    top: 6px;
    left: 8px;
    display: flex;
    align-items: center;
    gap: 4px;
    color: #fff;
    font-size: 7px;
    font-weight: bold;
    line-height: 14px;
    text-shadow: 1px 1px 1px #222;
}

.view-title svg {
    width: 13px;
    height: 13px;
}

.view-menus {
    position: absolute;
    top: 2px;
    right: 3px;
    display: flex;
    gap: 4px;
}

.view-menus button {
    height: 10px;
    padding: 0 4px;
    border: 1px solid #98a1a5;
    border-radius: 5px;
    color: #f0f2f3;
    font-size: 5px;
    line-height: 8px;
}

.view-menus i,
.wide i {
    display: inline-block;
    margin-left: 1px;
    border: 2px solid transparent;
    border-top-color: currentColor;
    border-bottom: 0;
    vertical-align: middle;
}

.wide i {
    margin-right: 2px;
    border: 2px solid transparent;
    border-top: 0;
    border-bottom: 3px solid #888;
}

.hint {
    position: absolute;
    right: 1px;
    bottom: 1px;
    left: 1px;
    margin: 0;
    padding: 2px 3px;
    background: rgba(172, 184, 184, 0.85);
    color: #2b3133;
    font-family: Lato, sans-serif;
    font-size: 6px;
    line-height: 8px;
}

/* network editor */
.network {
    position: relative;
    flex: 1;
    overflow: hidden;
    background: #2f2f2f;
}

.context {
    position: absolute;
    top: 8px;
    right: 6px;
    color: #555;
    font-size: 12px;
    font-weight: bold;
    line-height: 14px;
}

.wires {
    position: absolute;
    top: 0;
    left: 0;
    width: 387px;
    height: 478px;
    fill: none;
    stroke-dasharray: 2 1;
}

.sticky {
    position: absolute;
    top: 109px;
    left: 110px;
    width: 166px;
    height: 66px;
    overflow: hidden;
    border-radius: 4px;
    background: #bb4040;
    color: #1c0b0b;
    font-size: 9px;
    line-height: 12px;
}

.sticky header {
    height: 11px;
    padding: 4px;
    background: #e54545;
}

.sticky i {
    display: block;
    width: 8px;
    height: 2px;
    background: #200;
}

.sticky p {
    margin: 4px 2px;
}

.node {
    position: absolute;
    width: 73px;
}

.node h3 {
    margin: 0;
    color: #b5b5b5;
    font-size: 9px;
    font-weight: normal;
    line-height: 14px;
    white-space: nowrap;
}

.color-correct {
    top: 191px;
    left: 0;
    width: 49px;
}

.hair {
    top: 191px;
    left: 109px;
}

.material {
    top: 285px;
    left: 243px;
    width: 71px;
}

.card {
    border-radius: 4px;
    background: #3e3e3e;
    font-size: 5px;
    line-height: 6px;
}

.card header {
    display: flex;
    height: 14px;
    padding: 1px 4px;
    border-radius: 3px 3px 0 0;
    background: #cbcbcb;
}

.card header svg {
    width: 12px;
    height: 12px;
}

.flags {
    width: 22px;
    margin-left: auto;
    background: repeating-linear-gradient(100deg, transparent 0 6px, rgba(0, 0, 0, 0.35) 6px 7px);
}

.card .body {
    position: relative;
}

.card ul {
    display: flex;
    flex-direction: column;
    justify-content: space-between;
    margin: 0;
    padding: 0;
    list-style: none;
}

.hair ul {
    height: 141px;
    padding-bottom: 1px;
}

.material ul {
    height: 57px;
    padding: 1px 0 3px;
}

.card li {
    display: flex;
    align-items: center;
    gap: 3px;
    height: 6px;
    margin-left: -2px;
    color: #55bdb0;
}

.card li::before,
.out::after {
    width: 4px;
    height: 4px;
    border-radius: 50%;
    background: #54d6c8;
    content: "";
}

.card li.color,
.out {
    color: #55ab68;
}

.card li.color::before,
.out::after {
    background: #5cc873;
}

.card li.group {
    color: #eee;
}

.card li.group::before {
    width: 0;
    height: 0;
    border: 2px solid transparent;
    border-top: 3px solid #fff;
    border-radius: 0;
    background: none;
}

.card .out {
    position: absolute;
    top: 1px;
    right: -2px;
    display: flex;
    align-items: center;
    gap: 3px;
}

.hair .out {
    color: #52ad93;
}

.hair .out::after {
    background: #66e0b4;
}

.color-correct .body {
    height: 43px;
    padding-top: 26px;
}

.color-correct small {
    color: #4fb3a6;
    font-size: 5px;
}

.card footer {
    height: 7px;
    border-radius: 0 0 4px 4px;
    background: linear-gradient(#333, #333) calc(100% - 14px) 2px / 3px 2px no-repeat,
        linear-gradient(#444, #444) calc(100% - 5px) 2px / 3px 1px no-repeat,
        linear-gradient(#999, #999) calc(100% - 23px) 2px / 2px 3px no-repeat, #cbcbcb;
}

.color-correct .card,
.color-correct header {
    border-top-left-radius: 0;
}

.color-correct footer {
    border-bottom-left-radius: 0;
}

.hair .card {
    border: 1px solid #d49a9a;
}

.hair .card header {
    background-color: #f94848;
    border-bottom: 1px solid #222;
}

.hair .card footer {
    background-color: #f94848;
}

.material .card header {
    border-bottom: 1px solid #222;
}

.status {
    position: absolute;
    right: 0;
    bottom: 1px;
    left: 0;
    margin: 0;
    font-size: 8px;
    line-height: 12px;
    text-align: center;
}

/* parameters */
.parm-head {
    display: flex;
    align-items: center;
    height: 17px;
    padding: 0 1px 0 3px;
    background: #303030;
}

.parm-head label {
    margin: 0 3px;
    color: #ddd;
    font-weight: bold;
    white-space: nowrap;
}

.parm-head input {
    flex: 1;
    height: 11px;
    margin-right: 3px;
    padding-left: 2px;
}

.folder-tabs {
    display: flex;
    gap: 1px;
    height: 11px;
    padding-left: 2px;
    background: #2e2e2e;
}

.folder-tabs button {
    padding: 0 3px;
    background: #393939;
    color: #ccc;
    font-weight: bold;
}

.folder-tabs .active {
    background: #4c4c4c;
}

.parms {
    flex: 1;
    padding-top: 2px;
}

.parm {
    display: grid;
    grid-template-columns: 73px 39px 1fr;
    align-items: center;
    column-gap: 8px;
    height: 13px;
    padding-right: 17px;
}

.parm:first-child {
    height: 11px;
}

.parm > label:first-child {
    text-align: right;
    white-space: nowrap;
}

.parm .check {
    display: flex;
    grid-column: 2 / 4;
    align-items: center;
    gap: 3px;
    color: #ddd;
    font-weight: bold;
}

.check input {
    width: 7px;
    height: 7px;
    appearance: none;
}

.check input:checked::before {
    display: block;
    width: 3px;
    height: 5px;
    margin-left: 2px;
    border: solid #fff;
    border-width: 0 1px 1px 0;
    content: "";
    transform: rotate(40deg);
}

.parm input[type="text"] {
    width: 39px;
    height: 11px;
    padding-left: 2px;
    font-weight: bold;
}

.parm input[type="range"] {
    width: calc(100% + 6px);
    height: 11px;
    margin-left: -6px;
    appearance: none;
    background: linear-gradient(#174f8f, #174f8f) 0 4px / 100% 2px no-repeat,
        linear-gradient(#0d0d0d, #0d0d0d) 0 3px / 100% 4px no-repeat,
        repeating-linear-gradient(90deg, #888 0 1px, transparent 1px 8px) 0 7px / 100% 1px no-repeat;
}

.parm input[type="range"]::-webkit-slider-thumb {
    width: 3px;
    height: 11px;
    border: 1px solid #999;
    background: #777;
    appearance: none;
}

.grip {
    height: 4px;
    background: linear-gradient(#555, #444);
}

/* playbar */
.playbar {
    display: flex;
    align-items: center;
    height: 37px;
    padding: 0 3px 0 8px;
    border-top: 1px solid #4a4a4a;
    background: #2d2d2d;
}

.lanes {
    flex: 1;
}

.lane {
    display: flex;
    height: 18px;
    align-items: center;
}

.buttons {
    display: flex;
    width: 115px;
}

.buttons button {
    display: flex;
    align-items: center;
    justify-content: center;
    width: 14px;
    height: 13px;
    border-right: 1px solid #2a2a2a;
    background-color: #434343;
}

.buttons .on {
    background-color: #5f7a99;
}

.buttons .thin {
    width: 7px;
}

.buttons .thin svg {
    width: 5px;
}

.buttons .flat {
    width: 13px;
    background: #333;
}

.buttons input {
    width: 25px;
    height: 13px;
    margin-right: 1px;
    padding-left: 2px;
}

.timeline {
    position: relative;
    flex: 1;
    height: 18px;
    color: #999;
    font-size: 5px;
    line-height: 6px;
    background: linear-gradient(#777, #777) 0 12px / 100% 1px no-repeat;
}

.tick {
    position: absolute;
    top: 10px;
    width: 1px;
    height: 5px;
    background: #666;
}

.tick.major {
    top: 8px;
    height: 8px;
    background: #888;
}

.tick span {
    position: absolute;
    bottom: 9px;
    left: 0;
}

.cached {
    position: absolute;
    top: 8px;
    left: 0;
    width: 13%;
    height: 5px;
    background: #1468c7;
}

.playhead {
    position: absolute;
    top: 0;
    left: 12%;
    z-index: 1;
    width: 13px;
    margin-left: -6px;
    border: 1px solid #ddd;
    background: #0a0a0a;
    color: #eee;
    font-size: 7px;
    line-height: 8px;
    text-align: center;
}

.playhead::after {
    position: absolute;
    top: 9px;
    left: 3px;
    border: 3px solid transparent;
    border-top-color: #ddd;
    border-bottom: 0;
    content: "";
}

.range {
    display: flex;
    flex: 1;
    align-items: center;
    gap: 2px;
}

.range input {
    width: 22px;
    height: 11px;
    padding-left: 2px;
}

.range .plain {
    background: #282828;
}

.span {
    display: flex;
    flex: 1;
    justify-content: space-between;
    background: linear-gradient(#888, #888) 0 2px / 100% 1px no-repeat;
}

.span::before,
.span::after {
    border: 3px solid transparent;
    border-right: 0;
    border-left-color: #bbb;
    content: "";
}

.span::after {
    border-right: 3px solid #bbb;
    border-left: 0;
}

.setkey {
    display: flex;
    align-items: center;
    justify-content: center;
    width: 20px;
    height: 20px;
    margin-left: 2px;
    border-radius: 50%;
    background: #232323;
}

.keymenu {
    width: 8px;
    height: 11px;
    background: #3c3c3c;
}

.keymenu svg {
    width: 5px;
}

.keys {
    display: grid;
    grid-template-columns: 13px 81px;
    gap: 2px;
    margin-left: 3px;
}

.keys button {
    background: #484848;
    height: 13px;
}

.keys .wide,
.statusbar button {
    display: flex;
    align-items: center;
    justify-content: space-between;
    padding: 0 2px 0 8px;
    background: linear-gradient(#4d4d4d, #3d3d3d);
}

.statusbar {
    display: flex;
    align-items: center;
    justify-content: flex-end;
    gap: 2px;
    height: 13px;
    padding-right: 1px;
    background: #181818;
}

.statusbar button {
    width: 66px;
    height: 13px;
}

.statusbar .update {
    width: 61px;
}

/* notes drawn over the whole desktop */
.callout {
    position: absolute;
    top: 0;
    left: 0;
    width: 100%;
    height: auto;
    pointer-events: none;
}
```
FILE: script.js
```
const NS = 'http://www.w3.org/2000/svg';

// tool rails: '*' marks a switched-on tool, '>' starts the bottom group
const rails = {
    leftRail: [
        'shader *lamp sphere-y',
        'cursor *lock move rotate scale pose axes',
        'magnet-grid magnet-curve magnet-point magnet',
        '*viewtool region bowl',
        '> brush ball'
    ],
    rightRail: [
        '*plane green lock bulb-off *spheres bulb bulb *wheel link2 group',
        'point norm needle num poly poly corner *flag *checker diamond robot tri frame *stack',
        '*pinmap',
        '> warn *quad eye'
    ]
};

for (const id in rails) {
    rails[id].forEach(function (line, n) {
        const group = document.createElement('div');
        let names = line.split(' ');
        if (names[0] === '>') {
            group.className = 'push';
            names = names.slice(1);
        } else if (id === 'leftRail' && n === 0) {
            group.className = 'boxed';
        }
        group.innerHTML = names.map(name => {
            const on = name[0] === '*';
            const icon = on ? name.slice(1) : name;
            return `<button class="icon${on ? ' on' : ''}" aria-label="${icon}"><svg><use href="#${icon}"/></svg></button>`;
        }).join('');
        document.getElementById(id).appendChild(group);
    });
}

// small seeded random so the fur is the same on every load
let seed = 7;
function rnd() {
    seed = (seed * 16807) % 2147483647;
    return seed / 2147483647;
}

function add(parent, tag, attrs) {
    const el = document.createElementNS(NS, tag);
    for (const k in attrs) el.setAttribute(k, attrs[k]);
    parent.appendChild(el);
}

// ground grid in two-point perspective
const HORIZON = 40, W0 = 0.00543, A = 0.000607, B = 0.000423, NEAR = 0.0012;

function project(i, j) {
    const w = W0 + A * i + B * j;
    return ((82 * W0 + 700 * A * i - 760 * B * j) / w).toFixed(1) + ' ' + (HORIZON + 1 / w).toFixed(1);
}

let minor = '', major = '';
for (let n = -90; n <= 30; n++) {
    const k = n / 10;
    const iMin = (NEAR - W0 - B * k) / A;
    const jMin = (NEAR - W0 - A * k) / B;
    let d = '';
    if (k <= 2 && iMin < 3) d += 'M' + project(Math.max(iMin, -12), k) + 'L' + project(3, k);
    if (k <= 3 && jMin < 2) d += 'M' + project(k, Math.max(jMin, -12)) + 'L' + project(k, 2);
    if (n % 10 === 0) major += d; else minor += d;
}
const grid = document.getElementById('grid');
add(grid, 'path', { d: minor, fill: 'none', stroke: '#3c4a50', 'stroke-width': 0.5, 'stroke-opacity': 0.25 });
add(grid, 'path', { d: major, fill: 'none', stroke: '#e6edef', 'stroke-width': 1, 'stroke-opacity': 0.8 });

// fur
let hair = 'M138 338L132 268M138 338L136 268M229 331L239 266M229 331L230 264';
for (let n = 0; n < 300; n++) {
    const u = rnd(), v = rnd();
    const x = 138 + 32 * u + 52 * v + 7 * u * v;
    const y = 338 - 22 * u + 17 * v;
    const h = 46 + rnd() * 24;
    const tip = x + (rnd() - 0.5) * 16;
    hair += `M${x.toFixed(1)} ${y.toFixed(1)}Q${x.toFixed(1)} ${(y - h / 2).toFixed(1)} ${tip.toFixed(1)} ${(y - h).toFixed(1)}`;
}
document.getElementById('hair').setAttribute('d', hair);

// wireframe balls: x, y, radius, color
const balls = [
    [146, 196, 18, '#c85fa6'], [161, 187, 14, '#a83f98'], [194, 207, 13, '#84417f'],
    [212, 205, 12, '#0b9a4c'], [172, 227, 16, '#d2bcc4'], [165, 227, 12, '#68b8d2'],
    [201, 236, 9, '#6f86dc'], [193, 241, 10, '#8be096'], [194, 225, 18, '#15cdbb'],
    [157, 258, 16, '#8b25ad']
];
const ballGroup = document.getElementById('balls');
balls.forEach(function ([x, y, r, color]) {
    add(ballGroup, 'circle', { cx: x, cy: y, r: r, fill: color, 'fill-opacity': 0.45, stroke: color });
    for (let turn = 10; turn < 180; turn += 60) {
        [0.2, 0.5, 0.8].forEach(s => add(ballGroup, 'ellipse', {
            cx: x, cy: y, rx: r * s, ry: r, fill: 'none', stroke: color, 'stroke-width': 0.7,
            transform: `rotate(${turn} ${x} ${y})`
        }));
    }
});

// timeline ticks, one per frame
const timeline = document.getElementById('timeline');
for (let f = 1; f <= 100; f++) {
    const tick = document.createElement('div');
    const isMajor = f === 1 || f % 12 === 0;
    tick.className = isMajor ? 'tick major' : 'tick';
    tick.style.left = (f - 1) + '%';
    if (isMajor && f !== 12) tick.innerHTML = '<span>' + f + '</span>';
    timeline.appendChild(tick);
}
```
